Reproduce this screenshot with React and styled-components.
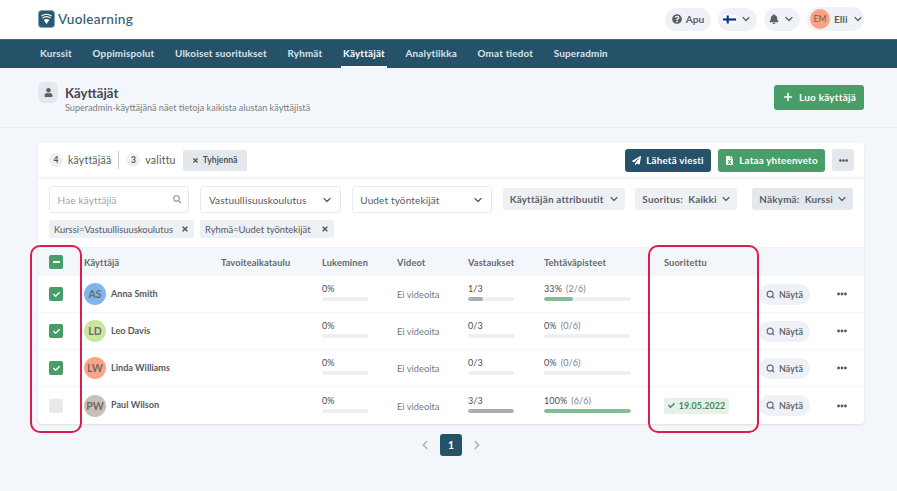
import React from "react";
import styled, { createGlobalStyle } from "styled-components";
import { FaPaperPlane, FaFileExcel, FaBell, FaQuestionCircle, FaUser, FaCheck, FaTimes, FaSearch, FaEllipsisH } from "react-icons/fa";
import { FiChevronDown, FiChevronLeft, FiChevronRight } from "react-icons/fi";
import { Plus, Search } from "lucide-react";

const Global = createGlobalStyle`
  html, body { margin: 0; padding: 0; }
  body { width: 897px; height: 491px; overflow: hidden; background: #f3f6fa; font-family: "Lato", "Open Sans", sans-serif; color: #4a4a4a; }
  * { box-sizing: border-box; }
`;
const Page = styled.div`position: relative; width: 897px; height: 491px;`;
const TopBar = styled.header`height: 39px; background: #fff; display: flex; align-items: center; justify-content: space-between; padding: 0 33px 1px 38px;`;
const Logo = styled.div`display: flex; align-items: center; gap: 3px;`;
const LogoWord = styled.span`font-family: "Lato", sans-serif; font-size: 13.6px; font-weight: 500; letter-spacing: .3px; color: #2e5c70;`;
const TopActions = styled.div`display: flex; align-items: center; gap: 7px;`;
const Pill = styled.div`display: flex; align-items: center; justify-content: center; width: ${p => p.$w}px; height: 23px; gap: 4px; border-radius: 12px; background: #eef2f6; font-size: 10.2px; font-weight: 700; color: #5b5f63;`;
const UserPill = styled(Pill)`height: 24px; justify-content: flex-start; padding-left: 3px;`;
const Initials = styled.span`width: 20px; height: 20px; border-radius: 50%; background: #fba283; display: flex; align-items: center; justify-content: center; font-size: 8.5px; font-weight: 400; color: #6b5b55;`;
const Nav = styled.nav`height: 29px; background: #255269; border-top: 1px solid #3c6a80; display: flex; padding-left: 38px; gap: 16.6px;`;
const NavItem = styled.a`height: 28px; padding: 0 2px 1px; display: flex; align-items: center; font-size: 9.85px; font-weight: 700; letter-spacing: .2px; color: ${p => p.$active ? "#fff" : "#dbe4ea"}; border-bottom: 2px solid ${p => p.$active ? "#fff" : "transparent"};`;
const PageHead = styled.section`height: 60px; border-bottom: 1px solid #e6edf3; display: flex; align-items: center; justify-content: space-between; padding: 0 33px 0 38px;`;
const HeadLeft = styled.div`display: flex; gap: 7px; align-items: flex-start;`;
const HeadIcon = styled.div`width: 20px; height: 21px; border-radius: 6px; background: #e2e8ee; display: flex; align-items: center; justify-content: center; color: #5b5f63;`;
const HeadText = styled.div`padding-top: 2px;`;
const Title = styled.h1`margin: 0; font-size: 13.2px; line-height: 18px; font-weight: 700; color: #44484c;`;
const Sub = styled.p`margin: 0; font-size: 9.1px; line-height: 12px; color: #7b7f84;`;
const Button = styled.button`border: 0; height: 23px; width: ${p => p.$w}px; border-radius: 3px; display: inline-flex; align-items: center; justify-content: center; gap: 5px; font-family: inherit; font-size: 9.8px; font-weight: 700; letter-spacing: .2px; white-space: nowrap; padding: 0; color: #fff; background: ${p => p.$bg};`;
const CreateButton = styled(Button)`height: 25px; margin-top: -1px; font-size: 10px;`;
const Card = styled.main`position: relative; margin: 15px 33px 0 38px; width: 826px; height: 281px; background: #fff; border-radius: 4px; box-shadow: 0 1px 2px rgba(60,80,100,.12);`;
const Summary = styled.div`height: 36px; display: flex; align-items: center; padding: 0 10px 0 11px; border-bottom: 2px solid #f1f4f8;`;
const Count = styled.span`width: 14px; height: 14px; border-radius: 50%; background: #edf1f5; display: flex; align-items: center; justify-content: center; font-size: 8.5px; font-weight: 700; margin-right: 5px; color: #555;`;
const SumText = styled.span`font-size: 10.5px; color: #55595d; letter-spacing: .2px;`;
const Divider = styled.span`width: 1px; height: 18px; background: #c5c9cd; margin: 0 7px;`;
const Clear = styled.button`border: 0; height: 21px; width: 64px; margin-left: 7px; padding: 0; border-radius: 2px; background: #e2e8ee; display: flex; align-items: center; justify-content: center; gap: 4px; font-family: inherit; font-size: 8.6px; font-weight: 700; color: #4f5357;`;
const SumRight = styled.div`margin-left: auto; display: flex; align-items: center; gap: 7px;`;
const MoreBtn = styled.button`border: 0; width: 22px; height: 22px; padding: 0; border-radius: 3px; background: #e2e8ee; display: flex; align-items: center; justify-content: center; color: #555;`;
const Filters = styled.div`height: 33px; padding: 7px 10px 0 11px; display: flex; align-items: flex-start;`;
const Input = styled.div`flex: none; height: 27px; width: 140.4px; margin-right: 11px; border: 1px solid #e7ebf0; border-radius: 3px; background: #fff; display: flex; align-items: center; justify-content: space-between; padding: 0 7px 0 7.5px; font-size: 10px; letter-spacing: .15px; color: ${p => p.$muted ? "#a0a4a8" : "#55595d"};`;
const FilterBtn = styled.div`flex: none; width: ${p => p.$w}px; margin-left: ${p => p.$ml}px; height: 22px; margin-top: 2px; padding: 0 5px 0 7px; border-radius: 3px; background: ${p => p.$dark ? "#e2e8ee" : "#edf1f5"}; display: flex; align-items: center; justify-content: space-between; font-size: 9.9px; font-weight: 700; letter-spacing: .2px; color: #5b5f63; white-space: nowrap;`;
const Tags = styled.div`display: flex; gap: 6px; padding: 8px 11px 0 11px; height: 35px;`;
const Tag = styled.div`width: ${p => p.$w}px; height: 18px; padding: 0 5px; background: #edf1f5; border-radius: 2px; display: flex; align-items: center; justify-content: space-between; font-size: 9.4px; color: #55595d; white-space: nowrap;`;
const cols = "46px 137px 101px 75px 71px 76px 120px 95px 60px 45px";
const HeadRow = styled.div`display: grid; grid-template-columns: ${cols}; height: 29px; align-items: center; background: #f3f6fa; border-top: 1px solid #eef1f5; font-size: 9.2px; font-weight: 700; letter-spacing: .15px; color: #64686c;`;
const Row = styled.div`display: grid; grid-template-columns: ${cols}; height: 37px; align-items: center; border-bottom: ${p => p.$last ? "0" : "1px solid #f3f5f8"};`;
const Check = styled.span`justify-self: start; margin-left: 11px; width: 14px; height: 14px; border-radius: 2px; display: flex; align-items: center; justify-content: center; color: #fff; background: ${p => p.$on ? "#479e68" : "#e9e9e9"};`;
const Dash = styled.span`width: 7px; height: 1.6px; background: #fff;`;
const UserCell = styled.div`display: flex; align-items: center; gap: 5px;`;
const Avatar = styled.span`width: 22px; height: 22px; border-radius: 50%; background: ${p => p.$bg}; display: flex; align-items: center; justify-content: center; font-size: 10.5px; font-weight: 700; color: #676c70;`;
const Name = styled.span`font-size: 9.1px; font-weight: 700; color: #55595d; margin-top: -2px;`;
const Metric = styled.div`display: flex; flex-direction: column; gap: 3px; width: ${p => p.$w}px; margin-top: -4px;`;
const MetricLabel = styled.span`font-size: 9px; line-height: 11px; letter-spacing: .1px; color: #4a4d50; white-space: nowrap;`;
const MetricSub = styled.span`color: #7b7f84; margin-left: 4px;`;
const Track = styled.div`height: 4px; border-radius: 2px; background: #eceff3; overflow: hidden;`;
const Fill = styled.div`height: 100%; border-radius: 2px; background: ${p => p.$c};`;
const NoVideo = styled.span`font-size: 9.3px; color: #76797d; margin-top: 1px;`;
const Done = styled.span`justify-self: start; height: 16px; width: 65px; justify-content: center; background: #e5f1e9; border-radius: 2px; display: flex; align-items: center; gap: 4px; font-size: 8.9px; font-weight: 700; letter-spacing: .1px; color: #3f8b58; white-space: nowrap;`;
const View = styled.span`width: 51px; height: 21px; border-radius: 11px; background: #eef2f6; display: flex; align-items: center; justify-content: center; gap: 4px; font-size: 8.9px; font-weight: 700; letter-spacing: .1px; color: #66696d;`;
const Dots = styled.span`display: flex; padding-left: 18px; color: #55595d;`;
const Pager = styled.div`display: flex; justify-content: center; align-items: center; gap: 8px; margin: 10px 0 0 5px; color: #a9adb1;`;
const PageNum = styled.span`width: 22px; height: 22px; border-radius: 3px; background: #255269; color: #fff; display: flex; align-items: center; justify-content: center; font-size: 10.5px; font-weight: 700;`;
const Highlight = styled.div`position: absolute; top: 245px; left: ${p => p.$x}px; width: ${p => p.$w}px; height: 188px; border: 2.5px solid #dc1c4b; border-radius: 10px; pointer-events: none;`;

const Chevron = () => <FiChevronDown size={12} strokeWidth={2.4} />;
const Flag = () => (
  <svg width="13" height="9" viewBox="0 0 18 11"><rect width="18" height="11" fill="#fff" /><rect y="4" width="18" height="3" fill="#003580" /><rect x="5" width="3" height="11" fill="#003580" /></svg>
);
const LogoMark = () => (
  <svg width="17" height="18" viewBox="0 0 17 18">
    <rect x="0.5" y="0.5" width="16" height="17" rx="3" fill="#2a5a72" stroke="#7da3b5" />
    <path d="M3.5 6 Q8.5 2.5 13.5 6" fill="none" stroke="#fff" strokeWidth="1.2" />
    <path d="M4.5 8 Q8.5 5.2 12.5 8" fill="none" stroke="#fff" strokeWidth="1.2" />
    <path d="M5.7 10 Q8.5 8 11.3 10 L8.5 14 Z" fill="#fff" />
  </svg>
);
const users = [
  { i: "AS", n: "Anna Smith", bg: "#7fb5ea", on: true, v: "1/3", vp: 33, t: "33%", tt: "(2/6)", tp: 33 },
  { i: "LD", n: "Leo Davis", bg: "#c9e59f", on: true, v: "0/3", vp: 0, t: "0%", tt: "(0/6)", tp: 0 },
  { i: "LW", n: "Linda Williams", bg: "#fba584", on: true, v: "0/3", vp: 0, t: "0%", tt: "(0/6)", tp: 0 },
  { i: "PW", n: "Paul Wilson", bg: "#cbbfb3", on: false, v: "3/3", vp: 100, t: "100%", tt: "(6/6)", tp: 100, done: "19.05.2022" },
];
const nav = ["Kurssit", "Oppimispolut", "Ulkoiset suoritukset", "Ryhmät", "Käyttäjät", "Analytiikka", "Omat tiedot", "Superadmin"];

export default function App() {
  return (
    <Page>
      <Global />
      <TopBar>
        <Logo><LogoMark /><LogoWord>Vuolearning</LogoWord></Logo>
        <TopActions>
          <Pill $w={46}><FaQuestionCircle size={10} />Apu</Pill>
          <Pill $w={39}><Flag /><Chevron /></Pill>
          <Pill $w={36}><FaBell size={10} /><Chevron /></Pill>
          <UserPill $w={57}><Initials>EM</Initials>Elli<Chevron /></UserPill>
        </TopActions>
      </TopBar>
      <Nav>{nav.map(n => <NavItem key={n} $active={n === "Käyttäjät"}>{n}</NavItem>)}</Nav>
      <PageHead>
        <HeadLeft>
          <HeadIcon><FaUser size={9} /></HeadIcon>
          <HeadText>
            <Title>Käyttäjät</Title>
            <Sub>Superadmin-käyttäjänä näet tietoja kaikista alustan käyttäjistä</Sub>
          </HeadText>
        </HeadLeft>
        <CreateButton $bg="#479e68" $w={90}><Plus size={12} strokeWidth={3} />Luo käyttäjä</CreateButton>
      </PageHead>
      <Card>
        <Summary>
          <Count>4</Count><SumText>käyttäjää</SumText>
          <Divider />
          <Count>3</Count><SumText>valittu</SumText>
          <Clear><FaTimes size={7} />Tyhjennä</Clear>
          <SumRight>
            <Button $bg="#255269" $w={86}><FaPaperPlane size={9} />Lähetä viesti</Button>
            <Button $bg="#479e68" $w={107}><FaFileExcel size={9} />Lataa yhteenveto</Button>
            <MoreBtn><FaEllipsisH size={9} /></MoreBtn>
          </SumRight>
        </Summary>
        <Filters>
          <Input $muted>Hae käyttäjiä<FaSearch size={8.5} color="#9a9ea2" /></Input>
          <Input>Vastuullisuuskoulutus<Chevron /></Input>
          <Input>Uudet työntekijät<Chevron /></Input>
          <FilterBtn $w={122} $ml={-0.5}>Käyttäjän attribuutit<Chevron /></FilterBtn>
          <FilterBtn $w={102} $ml={10.7}>Suoritus:&nbsp; Kaikki<Chevron /></FilterBtn>
          <FilterBtn $w={100.5} $ml={15} $dark>Näkymä:&nbsp; Kurssi<Chevron /></FilterBtn>
        </Filters>
        <Tags>
          <Tag $w={145}>Kurssi=Vastuullisuuskoulutus<FaTimes size={8} /></Tag>
          <Tag $w={134}>Ryhmä=Uudet työntekijät<FaTimes size={8} /></Tag>
        </Tags>
        <HeadRow>
          <Check $on><Dash /></Check>
          <span>Käyttäjä</span><span>Tavoiteaikataulu</span><span>Lukeminen</span><span>Videot</span>
          <span>Vastaukset</span><span>Tehtäväpisteet</span><span>Suoritettu</span>
        </HeadRow>
        {users.map((u, i) => (
          <Row key={u.i} $last={i === users.length - 1}>
            <Check $on={u.on}>{u.on && <FaCheck size={7} />}</Check>
            <UserCell><Avatar $bg={u.bg}>{u.i}</Avatar><Name>{u.n}</Name></UserCell>
            <span />
            <Metric $w={46}><MetricLabel>0%</MetricLabel><Track /></Metric>
            <NoVideo>Ei videoita</NoVideo>
            <Metric $w={46}><MetricLabel>{u.v}</MetricLabel><Track><Fill $c="#a9adb0" style={{ width: `${u.vp}%` }} /></Track></Metric>
            <Metric $w={87}><MetricLabel>{u.t}<MetricSub>{u.tt}</MetricSub></MetricLabel><Track><Fill $c="#80bd93" style={{ width: `${u.tp}%` }} /></Track></Metric>
            {u.done ? <Done><FaCheck size={7} />{u.done}</Done> : <span />}
            <View><Search size={9} strokeWidth={3} />Näytä</View>
            <Dots><FaEllipsisH size={10} /></Dots>
          </Row>
        ))}
      </Card>
      <Pager><FiChevronLeft size={14} strokeWidth={2.5} /><PageNum>1</PageNum><FiChevronRight size={14} strokeWidth={2.5} /></Pager>
      <Highlight $x={30} $w={52} />
      <Highlight $x={648} $w={111} />
    </Page>
  );
}
